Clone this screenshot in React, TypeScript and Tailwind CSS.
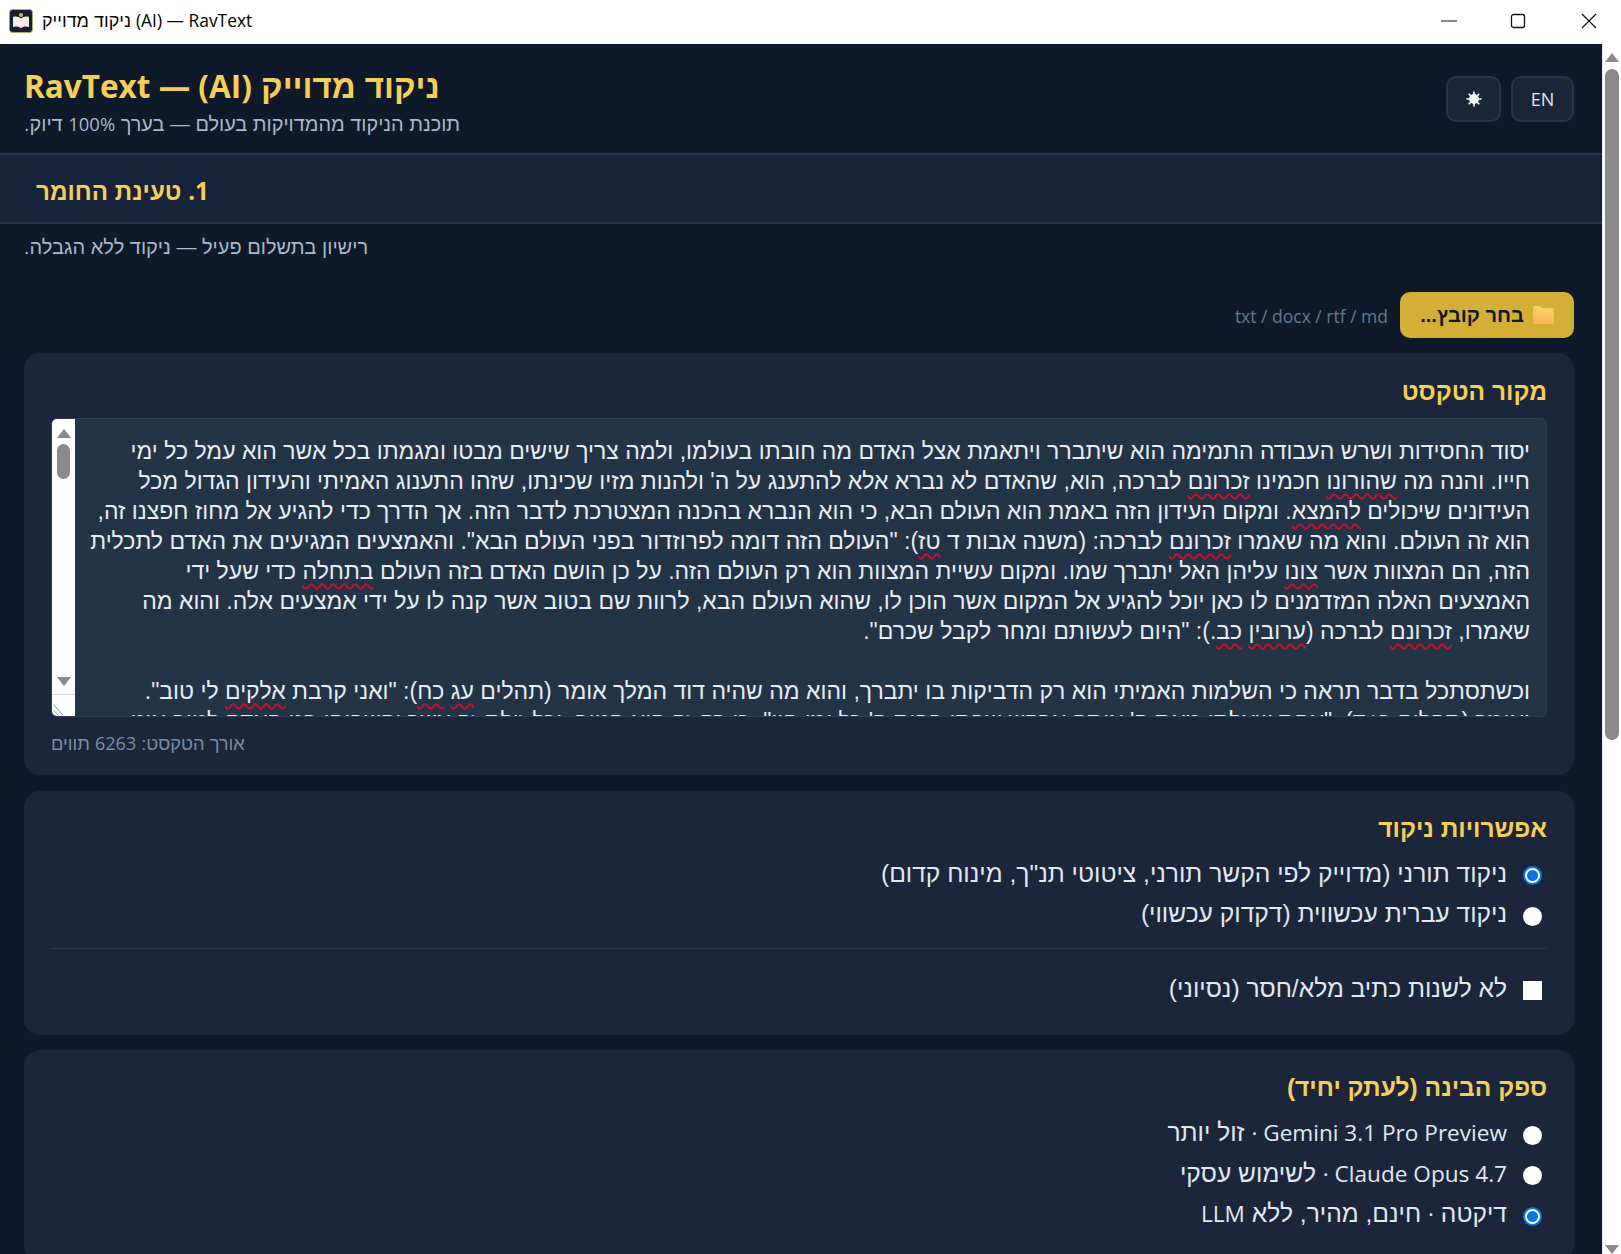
const Sq = ({ children }: { children: string }) => (
  <span className="underline decoration-wavy decoration-[#c8102e] decoration-2 underline-offset-[4px]">{children}</span>
);

// latin runs keep the humanist face, hebrew uses the base stack
const L = ({ children, className }: { children: string; className?: string }) => (
  <span className={"font-['Open_Sans',sans-serif] " + (className ?? "")}>{children}</span>
);

const Radio = ({ on }: { on?: boolean }) =>
  on ? (
    <span className="size-[19px] rounded-full bg-white border-[2px] border-[#0a75e0] p-[2px] shrink-0">
      <span className="block size-full rounded-full bg-[#0a75e0]" />
    </span>
  ) : (
    <span className="size-[19px] rounded-full bg-white shrink-0" />
  );

const Option = ({ on, children }: { on?: boolean; children: React.ReactNode }) => (
  <div className="flex items-center gap-[16px] h-[40.5px] pr-[5px]">
    <Radio on={on} />
    <span className="text-[24.6px] leading-[30px] text-[#e2e8f0] relative top-[-2px]">{children}</span>
  </div>
);

const Card = ({ title, children }: { title: string; children: React.ReactNode }) => (
  <section className="bg-[#1b263b] rounded-[16px] px-[27px] pt-[22px]">
    <h3 className="text-[24.5px] font-bold text-[#f5cf57] leading-[32px]">{title}</h3>
    {children}
  </section>
);

const Arrow = ({ up, className }: { up?: boolean; className?: string }) => (
  <svg width="14" height="9" viewBox="0 0 14 9" className={className}>
    <path d={up ? "M7 0 L14 9 L0 9 Z" : "M0 0 L14 0 L7 9 Z"} fill="#8a8a8a" />
  </svg>
);

export default function App() {
  return (
    <div className="h-screen w-full flex flex-col overflow-hidden bg-white font-['Liberation_Sans','Open_Sans',sans-serif]">
      {/* title bar */}
      <div className="h-[44px] shrink-0 flex items-center bg-white text-black pb-[2px]">
        <svg width="24" height="24" viewBox="0 0 24 24" className="ml-[9px] mr-[9px]">
          <rect x="0.5" y="0.5" width="23" height="23" rx="3" fill="#152033" stroke="#b9a36a" />
          <path d="M4 8 C7 7 10 8 12 9.5 C14 8 17 7 20 8 L20 18 C17 17 14 17.5 12 19 C10 17.5 7 17 4 18 Z" fill="#f4eee0" />
          <circle cx="12" cy="6" r="2" fill="#e3b93c" />
        </svg>
        <span className="text-[18px]">ניקוד מדוייק <L className="text-[17.4px]">(AI) — RavText</L></span>
        <div className="ml-auto flex items-center">
          <svg width="16" height="16" viewBox="0 0 16 16" className="mr-[53px]"><path d="M0 8 H16" stroke="#111" /></svg>
          <svg width="16" height="16" viewBox="0 0 16 16" className="mr-[55px]"><rect x="1.5" y="1.5" width="13" height="13" rx="2" fill="none" stroke="#111" strokeWidth="1.3" /></svg>
          <svg width="16" height="16" viewBox="0 0 16 16" className="mr-[24px]"><path d="M1 1 L15 15 M15 1 L1 15" stroke="#111" strokeWidth="1.2" /></svg>
        </div>
      </div>

      <div className="flex-1 min-h-0 flex">
        <main className="flex-1 min-w-0 bg-[#0e1a2a] overflow-hidden">
          {/* header */}
          <header className="h-[109px] flex items-start justify-between pl-[24px] pr-[28px]">
            <div>
              <h1 dir="rtl" className="text-[33px] text-left font-bold leading-[44px] text-[#f5cf57] mt-[20px]">ניקוד מדוייק <L className="text-[31.5px]">(AI) — RavText</L></h1>
              <p dir="rtl" className="text-[19.9px] leading-[26px] text-[#a9b8ca] mt-[2px] text-left">תוכנת הניקוד מהמדויקות בעולם — בערך <L className="text-[18.5px]">100%</L> דיוק.</p>
            </div>
            <div className="flex gap-[10px] mt-[32px]">
              <button className="w-[55px] h-[46px] rounded-[10px] bg-[#1b2538] border-2 border-[#27344a] flex items-center justify-center">
                <svg width="16" height="16" viewBox="0 0 16 16">
                  <circle cx="8" cy="8" r="5" fill="#fff" />
                  <path d="M8 0.5 V15.5 M0.5 8 H15.5 M2.7 2.7 L13.3 13.3 M13.3 2.7 L2.7 13.3" stroke="#fff" strokeWidth="1.6" />
                </svg>
              </button>
              <button className="w-[63px] h-[46px] rounded-[10px] bg-[#1b2538] border-2 border-[#27344a] text-[18px] text-[#e2e8f0] font-['Open_Sans',sans-serif]">EN</button>
            </div>
          </header>

          {/* stage bar */}
          <div className="h-[71px] bg-[#17233a] border-y-2 border-[#263445] flex items-center pl-[36px] pt-[6px]">
            <h2 dir="rtl" className="text-[24.2px] font-bold text-[#f5cf57]"><L>1.</L> טעינת החומר</h2>
          </div>

          <div className="pl-[24px] pr-[28px]">
            <p dir="rtl" className="text-left text-[20px] leading-[26px] text-[#a9b8ca] mt-[10px]">רישיון בתשלום פעיל — ניקוד ללא הגבלה.</p>

            <div className="flex justify-end items-center gap-[12px] mt-[32px]">
              <span className="text-[17.5px] text-[#64788f] font-['Open_Sans',sans-serif] relative top-[1px]">txt / docx / rtf / md</span>
              <button dir="rtl" className="w-[174px] h-[46px] rounded-[10px] bg-[#d4af37] text-[#0e1a2a] font-bold text-[20px] flex items-center justify-center gap-[9px]">
                <svg width="21" height="18" viewBox="0 0 21 18">
                  <defs>
                    <linearGradient id="folder" x1="0" y1="0" x2="0" y2="1">
                      <stop offset="0" stopColor="#f4d55f" />
                      <stop offset="1" stopColor="#fdb45c" />
                    </linearGradient>
                  </defs>
                  <path d="M0 2 Q0 0 2 0 H7 L9 2 H19 Q21 2 21 4 V16 Q21 18 19 18 H2 Q0 18 0 16 Z" fill="url(#folder)" />
                </svg>
                בחר קובץ...
              </button>
            </div>

            <div className="flex flex-col gap-[15.5px] mt-[15px]" dir="rtl">
              {/* source text */}
              <section className="bg-[#1b263b] rounded-[16px] px-[27px] pt-[23px] h-[422px]">
                <h3 className="text-[24.5px] font-bold text-[#f5cf57] leading-[32px]">מקור הטקסט</h3>
                <div className="mt-[10px] h-[299px] flex overflow-hidden rounded-[6px] bg-[#243447] border border-[#2e3f54]">
                  <div className="flex-1 min-w-0 pt-[17px] pr-[16px] text-[23px] leading-[30px] text-[#e8edf3] whitespace-nowrap overflow-hidden">
                    <div>יסוד החסידות ושרש העבודה התמימה הוא שיתברר ויתאמת אצל האדם מה חובתו בעולמו, ולמה צריך שישים מבטו ומגמתו בכל אשר הוא עמל כל ימי</div>
                    <div>חייו. והנה מה <Sq>שהורונו</Sq> חכמינו <Sq>זכרונם</Sq> לברכה, הוא, שהאדם לא נברא אלא להתענג על ה' ולהנות מזיו שכינתו, שזהו התענוג האמיתי והעידון הגדול מכל</div>
                    <div>העידונים שיכולים <Sq>להמצא</Sq>. ומקום העידון הזה באמת הוא העולם הבא, כי הוא הנברא בהכנה המצטרכת לדבר הזה. אך הדרך כדי להגיע אל מחוז חפצנו זה,</div>
                    <div>הוא זה העולם. והוא מה שאמרו <Sq>זכרונם</Sq> לברכה: (משנה אבות ד <Sq>טז</Sq>): "העולם הזה דומה לפרוזדור בפני העולם הבא". והאמצעים המגיעים את האדם לתכלית</div>
                    <div>הזה, הם המצוות אשר <Sq>צונו</Sq> עליהן האל יתברך שמו. ומקום עשיית המצוות הוא רק העולם הזה. על כן הושם האדם בזה העולם <Sq>בתחלה</Sq> כדי שעל ידי</div>
                    <div>האמצעים האלה המזדמנים לו כאן יוכל להגיע אל המקום אשר הוכן לו, שהוא העולם הבא, לרוות שם בטוב אשר קנה לו על ידי אמצעים אלה. והוא מה</div>
                    <div>שאמרו, <Sq>זכרונם</Sq> לברכה (<Sq>ערובין</Sq> <Sq>כב</Sq>.): "היום לעשותם ומחר לקבל שכרם".</div>
                    <div className="h-[30px]" />
                    <div>וכשתסתכל בדבר תראה כי השלמות האמיתי הוא רק הדביקות בו יתברך, והוא מה שהיה דוד המלך אומר (תהלים <Sq>עג</Sq> <Sq>כח</Sq>): "ואני קרבת <Sq>אלקים</Sq> לי טוב".</div>
                    <div>ואומר (תהלים כז ד): "אחת שאלתי מאת ה' אותה אבקש שבתי בבית ה' כל ימי חיי". כי רק זה הוא הטוב, וכל זולת זה אשר יחשבוהו בני האדם לטוב אינו</div>
                  </div>
                  <div className="w-[23px] shrink-0 bg-white flex flex-col items-center">
                    <Arrow up className="mt-[10px]" />
                    <div className="w-[13px] h-[35px] rounded-full bg-[#8a8a8a] mt-[6px]" />
                    <div className="flex-1" />
                    <Arrow className="mb-[8px]" />
                    <svg width="23" height="22" viewBox="0 0 23 22" className="border-t border-[#dcdcdc]">
                      <path d="M1 10 L11 21 M1 16 L6 21" stroke="#8a8a8a" />
                    </svg>
                  </div>
                </div>
                <p className="text-left text-[18.3px] leading-[24px] text-[#7d8ea3] mt-[14px]">אורך הטקסט: <L className="text-[18px]">6263</L> תווים</p>
              </section>

              {/* nikud options */}
              <Card title="אפשרויות ניקוד">
                <div className="mt-[11px]">
                  <Option on>{'ניקוד תורני (מדוייק לפי הקשר תורני, ציטוטי תנ"ך, מינוח קדום)'}</Option>
                  <Option>ניקוד עברית עכשווית (דקדוק עכשווי)</Option>
                </div>
                <div className="border-t border-[#2a3a4e] mt-[11px]" />
                <div className="flex items-center gap-[16px] h-[40px] pr-[5px] mt-[22px]">
                  <span className="size-[19px] bg-white shrink-0" />
                  <span className="text-[24.6px] leading-[30px] text-[#e2e8f0] relative top-[-2px]">לא לשנות כתיב מלא/חסר (נסיוני)</span>
                </div>
                <div className="h-[24px]" />
              </Card>

              {/* provider */}
              <Card title="ספק הבינה (לעתק יחיד)">
                <div className="mt-[11px] pb-[24px]">
                  <Option><L className="text-[22.6px]">Gemini 3.1 Pro Preview ·</L> זול יותר</Option>
                  <Option><L className="text-[22.6px]">Claude Opus 4.7 ·</L> לשימוש עסקי</Option>
                  <Option on>דיקטה <L className="text-[22.6px]">·</L> חינם, מהיר, ללא <L className="text-[22.6px]">LLM</L></Option>
                </div>
              </Card>
            </div>
          </div>
        </main>

        {/* window scrollbar */}
        <div className="w-[19px] shrink-0 bg-white flex flex-col items-center border-l border-[#e8e8e8]">
          <Arrow up className="mt-[9px]" />
          <div className="w-[14px] h-[671px] rounded-full bg-[#8a8a8a] mt-[7px]" />
          <div className="flex-1" />
          <Arrow />
        </div>
      </div>
    </div>
  );
}
